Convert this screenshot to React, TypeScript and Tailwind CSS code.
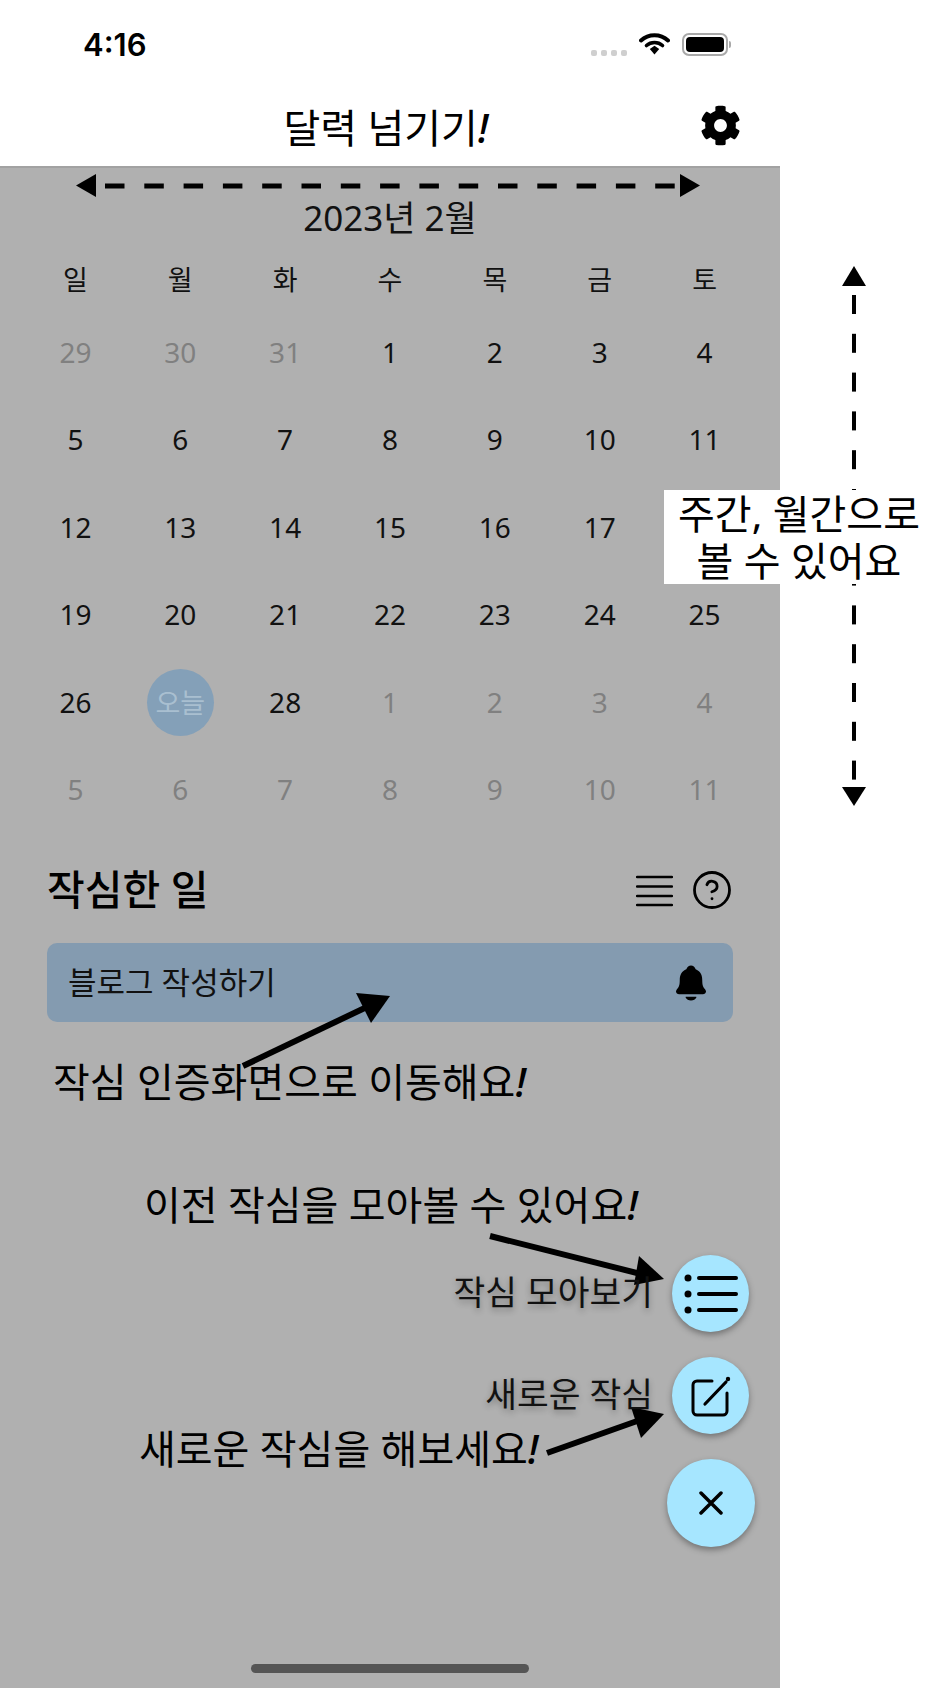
import { CircleHelp } from "lucide-react";
import { FaCog } from "react-icons/fa";
import { IoNotifications } from "react-icons/io5";

const weekdays = ["일", "월", "화", "수", "목", "금", "토"];

// muted = 이전/다음 달 날짜
const days = [
  { n: "29", muted: true }, { n: "30", muted: true }, { n: "31", muted: true },
  { n: "1" }, { n: "2" }, { n: "3" }, { n: "4" },
  { n: "5" }, { n: "6" }, { n: "7" }, { n: "8" }, { n: "9" }, { n: "10" }, { n: "11" },
  { n: "12" }, { n: "13" }, { n: "14" }, { n: "15" }, { n: "16" }, { n: "17" }, { n: "18" },
  { n: "19" }, { n: "20" }, { n: "21" }, { n: "22" }, { n: "23" }, { n: "24" }, { n: "25" },
  { n: "26" }, { n: "오늘", today: true }, { n: "28" },
  { n: "1", muted: true }, { n: "2", muted: true }, { n: "3", muted: true }, { n: "4", muted: true },
  { n: "5", muted: true }, { n: "6", muted: true }, { n: "7", muted: true }, { n: "8", muted: true },
  { n: "9", muted: true }, { n: "10", muted: true }, { n: "11", muted: true },
];

function StatusIcons() {
  return (
    <div className="flex items-center">
      <div className="flex gap-[4px] mt-[16px]">
        {[0, 1, 2, 3].map((i) => (
          <div key={i} className="w-[6px] h-[6px] rounded-[2px] bg-[#cfcfcf]" />
        ))}
      </div>
      <svg width="31" height="23" viewBox="0 0 31 23" className="ml-[12px] -mt-[2px]">
        <path d="M2 8.5C9.5 1.5 21.5 1.5 29 8.5" fill="none" stroke="#000" strokeWidth="4" strokeLinecap="round" />
        <path d="M7.5 13.5C12 9.5 19 9.5 23.5 13.5" fill="none" stroke="#000" strokeWidth="3.6" strokeLinecap="round" />
        <path d="M10.8 17L15.5 13.8L20.2 17L15.5 22.5Z" fill="#000" />
      </svg>
      <div className="ml-[12px] w-[46px] h-[23px] rounded-[7px] border-2 border-[#a9a9a9] p-[2px]">
        <div className="w-full h-full rounded-[4px] bg-black" />
      </div>
      <div className="ml-[1px] w-[2px] h-[7px] rounded-r-[2px] bg-[#a9a9a9]" />
    </div>
  );
}

// 설명용 화살표들
function Annotations() {
  const hDashes = Array.from({ length: 15 }, (_, i) => 105 + i * 39.3);
  const vDashes = Array.from({ length: 13 }, (_, i) => 295 + i * 38.8);
  return (
    <svg width="934" height="1688" viewBox="0 0 934 1688" className="absolute left-0 top-0 pointer-events-none">
      <path d="M96 174L76 185.5L96 197Z" fill="#000" />
      <path d="M680 174L700 185.5L680 197Z" fill="#000" />
      {hDashes.map((x) => (
        <rect key={x} x={x} y="183.5" width="19.5" height="5" fill="#000" />
      ))}
      <path d="M854 266L842 286H866Z" fill="#000" />
      <path d="M854 806L842 787H866Z" fill="#000" />
      {vDashes.map((y) => (
        <rect key={y} x="852" y={y} width="4" height="19" fill="#000" />
      ))}
      <path d="M243 1066L371 1005" stroke="#000" strokeWidth="6" />
      <path d="M390 996L356 993L371 1023Z" fill="#000" />
      <path d="M490 1236L645 1275" stroke="#000" strokeWidth="6" />
      <path d="M664 1279L639 1256L634 1285Z" fill="#000" />
      <path d="M547 1453L640 1420" stroke="#000" strokeWidth="6" />
      <path d="M664 1414L631 1407L641 1438Z" fill="#000" />
    </svg>
  );
}

function Fab({ label, size, children }: { label?: string; size: string; children: React.ReactNode }) {
  return (
    <div className="flex items-center justify-end gap-[19px]">
      {label && (
        <span className="text-[34.5px] leading-[40px] text-[#111] -mt-[3px] [text-shadow:0_3px_6px_rgba(0,0,0,0.3)]">{label}</span>
      )}
      <div className={`${size} rounded-full bg-[#a6e6ff] shadow-[0_3px_6px_rgba(0,0,0,0.35)] flex items-center justify-center`}>
        {children}
      </div>
    </div>
  );
}

export default function App() {
  return (
    <div className="relative w-[934px] h-[1688px] bg-white overflow-hidden font-['Noto_Sans','Noto_Sans_CJK_KR',sans-serif] text-black">
      <div className="w-[780px] h-full flex flex-col">
        {/* status bar */}
        <div className="h-[90px] pl-[83px] pr-[49px] pt-[24px] flex justify-between items-start">
          <span className="font-['Inter','Noto_Sans_CJK_KR',sans-serif] text-[31px] leading-[42px] font-semibold">4:16</span>
          <div className="mt-[9px]">
            <StatusIcons />
          </div>
        </div>

        {/* header */}
        <div className="relative h-[76px] flex items-center justify-center">
          <h1 className="text-[40px] leading-[50px] -ml-[8px]">
            달력 넘기기<i className="font-medium">!</i>
          </h1>
          <FaCog className="absolute right-[39px] top-[15px] w-[41px] h-[41px]" />
        </div>

        <div className="flex-1 flex flex-col bg-[#b0b0b0] border-t-2 border-[#a2a2a2]">
          <div className="mt-[30px] h-[40px] flex items-center justify-center text-[35px] text-[#111]">2023년 2월</div>

          <div className="mt-[22px] px-[23px] grid grid-cols-7 h-[40px]">
            {weekdays.map((d) => (
              <div key={d} className="flex items-center justify-center text-[27px] text-[#111]">{d}</div>
            ))}
          </div>

          <div className="mt-[9px] px-[23px] grid grid-cols-7 auto-rows-[87.5px]">
            {days.map((d, i) => (
              <div key={i} className="flex items-center justify-center">
                {d.today ? (
                  <div className="w-[67px] h-[67px] rounded-full bg-[#84a0b8] flex items-center justify-center text-[27px] text-[#a9bfd0]">
                    {d.n}
                  </div>
                ) : (
                  <span className={`text-[28px] -mt-[2px] ${d.muted ? "text-[#808080]" : "text-[#111]"}`}>{d.n}</span>
                )}
              </div>
            ))}
          </div>

          {/* 작심한 일 */}
          <div className="mt-[33px] mx-[47px] h-[44px] flex items-center justify-between">
            <h2 className="text-[41px] leading-[44px] font-medium">작심한 일</h2>
            <div className="flex items-center gap-[21px] mr-[3px]">
              <svg width="37" height="32" viewBox="0 0 37 32" className="mt-[3px]">
                <path d="M1 3H36M1 12.500H36M1 22H36M1 31H36" stroke="#000" strokeWidth="2.500" strokeLinecap="round" transform="translate(0 -1)" />
              </svg>
              <CircleHelp className="w-[42px] h-[42px] -mx-[3px] mt-[1px] text-black" strokeWidth={1.6} />
            </div>
          </div>

          <div className="mt-[32px] mx-[47px] h-[79px] pl-[21px] pr-[22px] rounded-[10px] bg-[#849bb0] flex items-center justify-between">
            <span className="text-[31px] text-[#111]">블로그 작성하기</span>
            <IoNotifications className="w-[40px] h-[40px]" />
          </div>

          <div className="mt-auto mb-[15px] mx-auto w-[278px] h-[9px] rounded-full bg-[#555555]" />
        </div>
      </div>

      <Annotations />

      {/* 설명 문구 */}
      <p className="absolute left-[53px] top-[1060px] text-[40px] leading-[44px] whitespace-nowrap">
        작심 인증화면으로 이동해요<i className="font-medium">!</i>
      </p>
      <p className="absolute left-[144px] top-[1183px] text-[40px] leading-[44px] whitespace-nowrap">
        이전 작심을 모아볼 수 있어요<i className="font-medium">!</i>
      </p>
      <p className="absolute left-[139px] top-[1427px] text-[40px] leading-[44px] whitespace-nowrap">
        새로운 작심을 해보세요<i className="font-medium">!</i>
      </p>
      <div className="absolute left-[664px] top-[490px] w-[270px] h-[94px] bg-white flex items-center justify-center text-center text-[40px] leading-[47px]">
        <span className="whitespace-nowrap">
          주간, 월간으로
          <br />
          볼 수 있어요
        </span>
      </div>

      {/* FAB */}
      <div className="absolute left-0 top-[1255px] w-[755px] flex flex-col items-end gap-[25px]">
        <div className="pr-[6px]">
          <Fab label="작심 모아보기" size="w-[77px] h-[77px]">
            <svg width="54" height="40" viewBox="0 0 54 40">
              <circle cx="4" cy="4" r="3.500" fill="#000" />
              <circle cx="4" cy="20" r="3.500" fill="#000" />
              <circle cx="4" cy="36" r="3.500" fill="#000" />
              <path d="M15 4H52M15 20H52M15 36H52" stroke="#000" strokeWidth="4" strokeLinecap="round" />
            </svg>
          </Fab>
        </div>
        <div className="pr-[6px]">
          <Fab label="새로운 작심" size="w-[77px] h-[77px]">
            <svg width="40" height="42" viewBox="0 0 40 42">
              <path d="M21 6H6a4 4 0 0 0-4 4v26a4 4 0 0 0 4 4h26a4 4 0 0 0 4-4V18" fill="none" stroke="#000" strokeWidth="3" strokeLinecap="round" />
              <path d="M14 29L35 7" stroke="#000" strokeWidth="3.200" strokeLinecap="round" />
              <circle cx="37" cy="4" r="2.200" fill="#000" />
            </svg>
          </Fab>
        </div>
        <Fab size="w-[88px] h-[88px]">
          <svg width="24" height="24" viewBox="0 0 24 24">
            <path d="M2 2L22 22M22 2L2 22" stroke="#000" strokeWidth="3.500" strokeLinecap="round" />
          </svg>
        </Fab>
      </div>
    </div>
  );
}
